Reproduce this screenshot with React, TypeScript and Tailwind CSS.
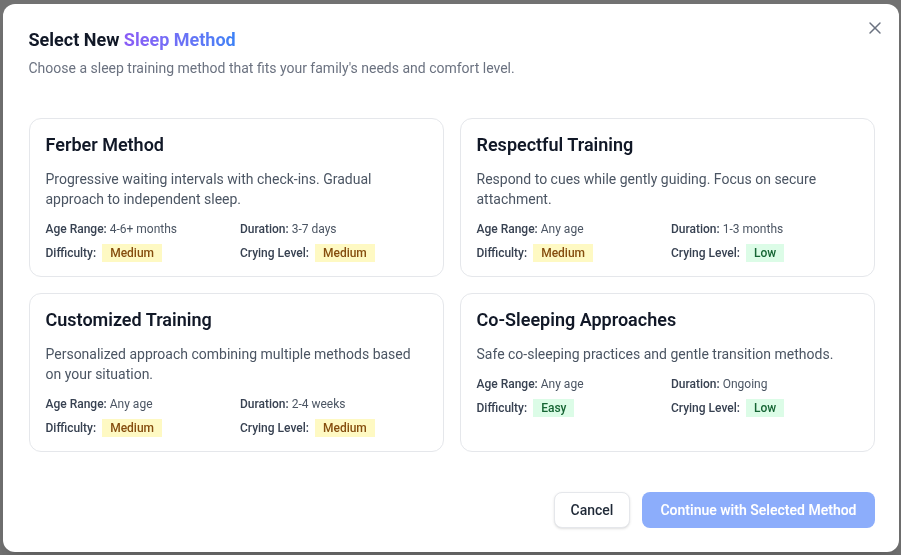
import { X } from "lucide-react";

type Level = "Easy" | "Medium" | "Low";

type Method = {
  title: string;
  desc: string;
  age: string;
  duration: string;
  difficulty: Level;
  crying: Level;
};

const methods: Method[] = [
  {
    title: "Ferber Method",
    desc: "Progressive waiting intervals with check-ins. Gradual approach to independent sleep.",
    age: "4-6+ months",
    duration: "3-7 days",
    difficulty: "Medium",
    crying: "Medium",
  },
  {
    title: "Respectful Training",
    desc: "Respond to cues while gently guiding. Focus on secure attachment.",
    age: "Any age",
    duration: "1-3 months",
    difficulty: "Medium",
    crying: "Low",
  },
  {
    title: "Customized Training",
    desc: "Personalized approach combining multiple methods based on your situation.",
    age: "Any age",
    duration: "2-4 weeks",
    difficulty: "Medium",
    crying: "Medium",
  },
  {
    title: "Co-Sleeping Approaches",
    desc: "Safe co-sleeping practices and gentle transition methods.",
    age: "Any age",
    duration: "Ongoing",
    difficulty: "Easy",
    crying: "Low",
  },
];

function Badge({ level }: { level: Level }) {
  const cls =
    level === "Medium"
      ? "bg-[#fef9c3] text-[#854d0e]"
      : "bg-[#dcfce7] text-[#166534]";
  return <span className={`ml-1.5 px-2 py-0.5 font-medium ${cls}`}>{level}</span>;
}

function Card({ m }: { m: Method }) {
  return (
    <div className="rounded-xl border border-[#e5e7eb] bg-white px-4 pt-3 pb-[15px]">
      <h3 className="text-lg font-semibold leading-7 text-[#111827]">{m.title}</h3>
      <p className="mt-2.5 text-sm leading-5 text-[#4b5563]">{m.desc}</p>
      <div className="mt-3 grid grid-cols-2 gap-x-2 gap-y-2 text-xs leading-4">
        <div>
          <span className="font-medium text-[#374151]">Age Range:</span>{" "}
          <span className="text-[#4b5563]">{m.age}</span>
        </div>
        <div>
          <span className="font-medium text-[#374151]">Duration:</span>{" "}
          <span className="text-[#4b5563]">{m.duration}</span>
        </div>
        <div>
          <span className="font-medium text-[#374151]">Difficulty:</span>
          <Badge level={m.difficulty} />
        </div>
        <div>
          <span className="font-medium text-[#374151]">Crying Level:</span>
          <Badge level={m.crying} />
        </div>
      </div>
    </div>
  );
}

export default function App() {
  return (
    <div
      className="fixed inset-0 flex items-center justify-center bg-[#727272]"
      style={{ fontFamily: "Roboto, 'Noto Sans', sans-serif" }}
    >
      <div className="relative w-full max-w-4xl rounded-xl bg-white pl-[26px] pr-[24px] pt-6 pb-6 shadow-xl">
        <button className="absolute right-[14px] top-[14px] text-[#6b7280]">
          <X size={20} strokeWidth={1.75} />
        </button>
        <h2 className="text-lg font-bold leading-6 text-[#111827]">
          Select New{" "}
          <span className="bg-gradient-to-r from-[#8b5cf6] to-[#3b82f6] bg-clip-text text-transparent">
            Sleep Method
          </span>
        </h2>
        <p className="mt-1.5 text-sm leading-5 text-[#6b7280]">
          Choose a sleep training method that fits your family's needs and comfort level.
        </p>
        <div className="mt-10 grid grid-cols-2 gap-4">
          {methods.map((m) => (
            <Card key={m.title} m={m} />
          ))}
        </div>
        <div className="mt-10 flex justify-end gap-3">
          <button className="h-9 rounded-lg border border-[#e5e7eb] bg-white px-4 text-sm font-medium text-[#1f2937] shadow-sm">
            Cancel
          </button>
          <button className="h-9 rounded-lg bg-[#8cadfb] px-[18px] text-sm font-semibold text-white">
            Continue with Selected Method
          </button>
        </div>
      </div>
    </div>
  );
}
